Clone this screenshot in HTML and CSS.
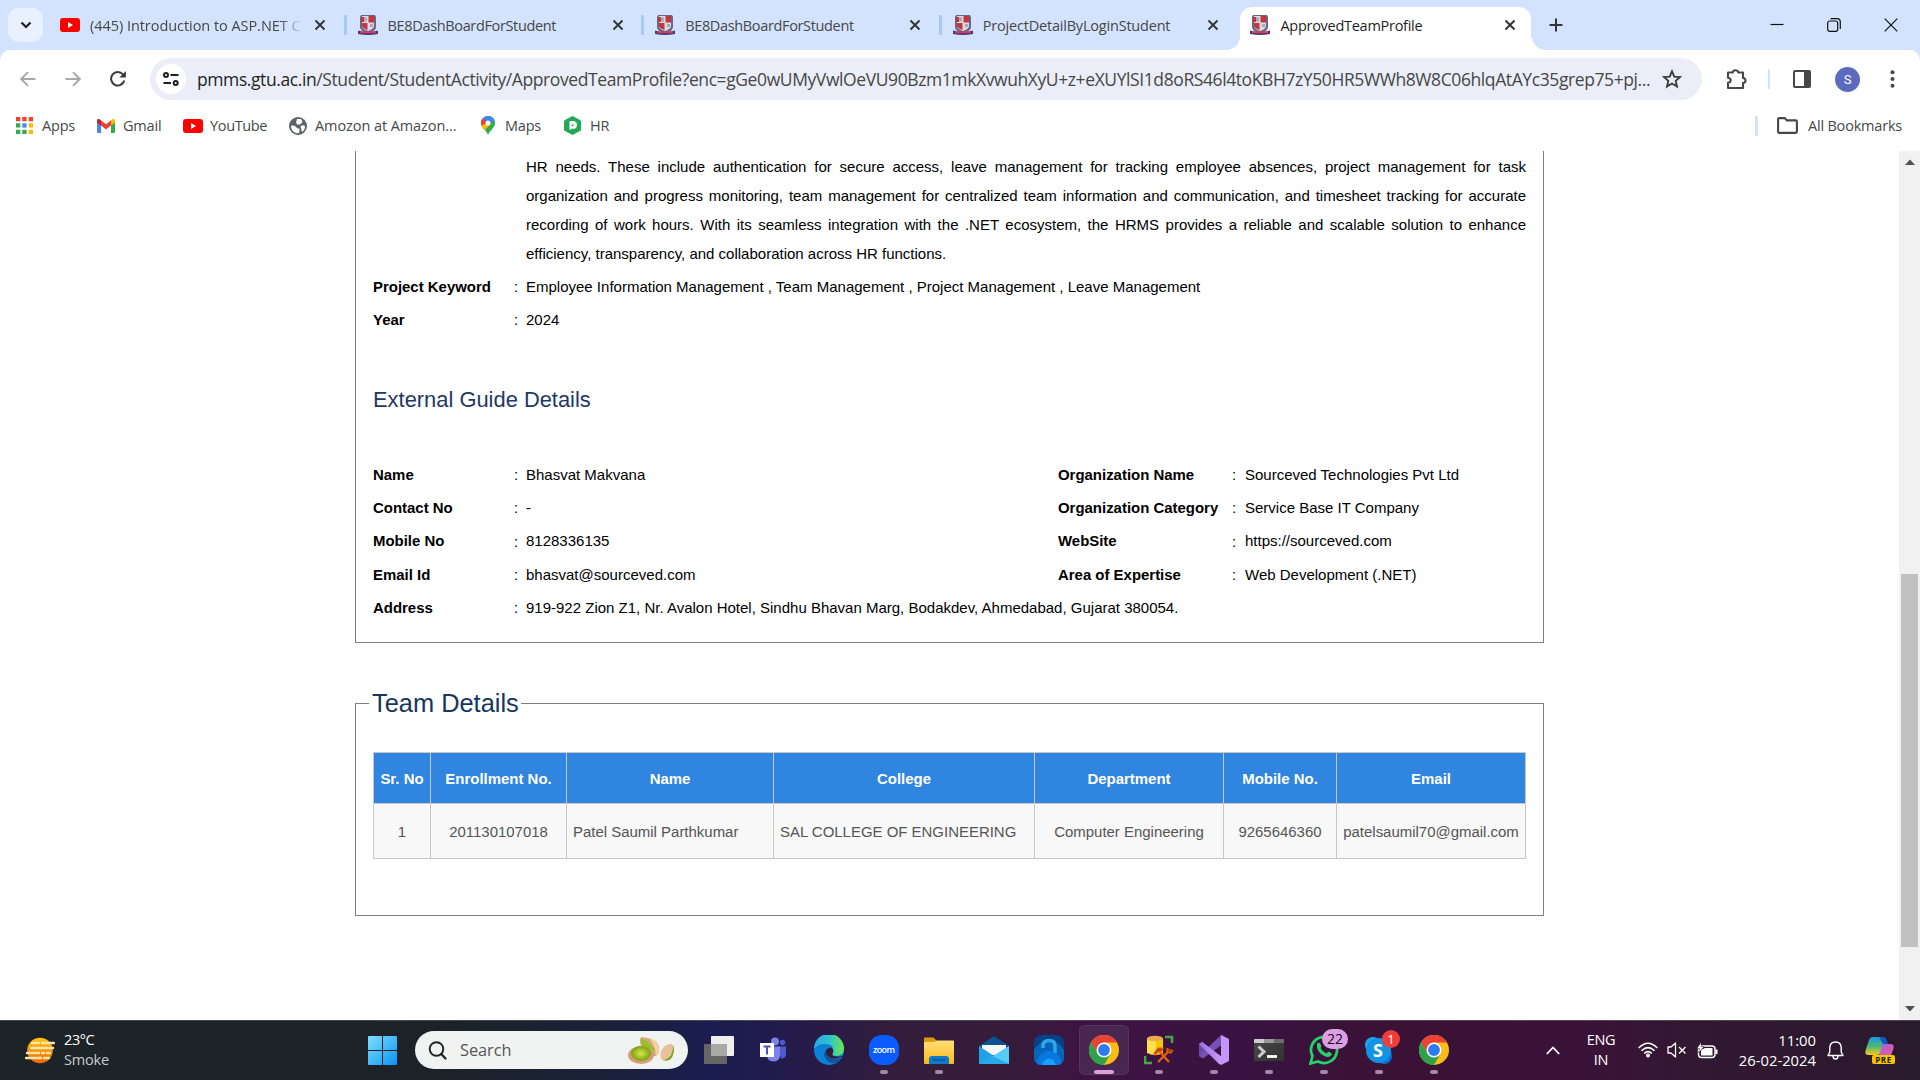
FILE: index.html
```html
<!DOCTYPE html>
<html lang="en">
<head>
<meta charset="utf-8">
<title>ApprovedTeamProfile</title>
<link rel="stylesheet" href="styles.css">
</head>
<body>
<svg class="defs" width="0" height="0" aria-hidden="true">
  <defs>
    <linearGradient id="g-win" x1="0" y1="0" x2="1" y2="1"><stop offset="0" stop-color="#7fe0ff"/><stop offset="1" stop-color="#0a93f5"/></linearGradient>
    <linearGradient id="g-sun" x1="0" y1="0" x2="0" y2="1"><stop offset="0" stop-color="#ffc60b"/><stop offset="1" stop-color="#ee6407"/></linearGradient>
    <linearGradient id="g-edge" x1="0" y1="0" x2="1" y2="0"><stop offset="0" stop-color="#2aa8e8"/><stop offset=".5" stop-color="#2fc0d0"/><stop offset="1" stop-color="#6be84c"/></linearGradient>
    <linearGradient id="g-folder" x1="0" y1="0" x2="0" y2="1"><stop offset="0" stop-color="#ffe07a"/><stop offset="1" stop-color="#fbb818"/></linearGradient>
    <linearGradient id="g-cop1" x1="0" y1="0" x2="0" y2="1"><stop offset="0" stop-color="#1a98e8"/><stop offset=".5" stop-color="#4ab67a"/><stop offset="1" stop-color="#f3cb1c"/></linearGradient>
    <linearGradient id="g-cop2" x1="0" y1="0" x2="1" y2="1"><stop offset="0" stop-color="#a259f0"/><stop offset="1" stop-color="#f2608a"/></linearGradient>
    <linearGradient id="g-term" x1="0" y1="0" x2="1" y2="1"><stop offset="0" stop-color="#4a4a4a"/><stop offset="1" stop-color="#313131"/></linearGradient>
    <linearGradient id="g-vs" x1="0" y1="0" x2="1" y2="0"><stop offset="0" stop-color="#9b6fe0"/><stop offset="1" stop-color="#c99bff"/></linearGradient>
    <radialGradient id="g-nut"><stop offset="0" stop-color="#d8e84a"/><stop offset="1" stop-color="#7aa010"/></radialGradient>
  </defs>
  <symbol id="close" viewBox="0 0 12 12"><path d="M1.5 1.5l9 9M10.5 1.5l-9 9" stroke="#333" stroke-width="1.9" fill="none"/></symbol>
  <symbol id="crest" viewBox="0 0 20 20">
    <path d="M3 0h14l1 2v10q0 4-8 6.500q-8-2.500-8-6.500V2z" fill="#69658d"/>
    <path d="M4 1h12v10q0 3-6 5q-6-2-6-5z" fill="#ddd9e2"/>
    <path d="M10.500 1H16v6.500h-5.500zM4 8h5.500v7q-5.500-2-5.500-4zM3 2h3v5H3z" fill="#c0383c"/>
    <path d="M6 2.500h3v4H6zM12 9h3v3h-3z" fill="#a9a5ba"/>
    <path d="M0 15.500q10 3 20 0V19q-10 2-20 0z" fill="#443a86"/><path d="M2 17.300h16" stroke="#dd3a47" stroke-width="1.800" fill="none"/>
  </symbol>
  <symbol id="ytube" viewBox="0 0 20 14"><rect width="20" height="14" rx="3" fill="#f00"/><path d="M8 4v6l5-3z" fill="#fff"/></symbol>
  <symbol id="chrome" viewBox="0 0 30 30">
    <circle cx="15" cy="15" r="15" fill="#fbbc14"/>
    <path d="M15 15L8.500 18.750L2 7.500A15 15 0 0 0 15 30L21.500 18.750z" fill="#2ba24c"/>
    <path d="M2 7.500A15 15 0 0 1 28 7.500H15L8.500 18.750z" fill="#ea4335"/>
    <path d="M8.500 18.750L2 7.500" stroke="#2ba24c" stroke-width=".6"/>
    <circle cx="15" cy="15" r="7.500" fill="#fff"/><circle cx="15" cy="15" r="5.900" fill="#2d7bf0"/>
  </symbol>
</svg>

<header class="tabstrip">
  <button class="tab-search"><svg width="12" height="8" viewBox="0 0 12 8"><path d="M1.500 1.500L6 6l4.500-4.500" fill="none" stroke="#1f1f1f" stroke-width="2.200"/></svg></button>
  <div class="tab"><svg class="fav fav-yt"><use href="#ytube"/></svg><span class="tab-title fade">(445) Introduction to ASP.NET C</span><svg class="x"><use href="#close"/></svg></div>
  <div class="tab sep"><svg class="fav"><use href="#crest"/></svg><span class="tab-title">BE8DashBoardForStudent</span><svg class="x"><use href="#close"/></svg></div>
  <div class="tab sep"><svg class="fav"><use href="#crest"/></svg><span class="tab-title">BE8DashBoardForStudent</span><svg class="x"><use href="#close"/></svg></div>
  <div class="tab sep"><svg class="fav"><use href="#crest"/></svg><span class="tab-title wide">ProjectDetailByLoginStudent</span><svg class="x"><use href="#close"/></svg></div>
  <div class="tab active"><svg class="fav"><use href="#crest"/></svg><span class="tab-title">ApprovedTeamProfile</span><svg class="x"><use href="#close"/></svg></div>
  <svg class="newtab" width="14" height="14" viewBox="0 0 14 14"><path d="M7 .5v13M.5 7h13" stroke="#333" stroke-width="2"/></svg>
  <div class="winctl">
    <svg width="14" height="14" viewBox="0 0 14 14"><path d="M.5 6.500h13" stroke="#111" stroke-width="1.200"/></svg>
    <svg width="14" height="14" viewBox="0 0 14 14"><rect x=".7" y="3" width="10" height="10.300" rx="2" fill="none" stroke="#111" stroke-width="1.200"/><path d="M3.500 .7H10q3.300 0 3.300 3.300v7" fill="none" stroke="#111" stroke-width="1.200"/></svg>
    <svg width="14" height="14" viewBox="0 0 14 14"><path d="M.7 .7l12.600 12.600M13.300 .7L.7 13.300" stroke="#111" stroke-width="1.200"/></svg>
  </div>
</header>

<div class="toolbar-wrap">
  <nav class="toolbar">
    <div class="nav">
      <svg width="16" height="16" viewBox="0 0 16 16"><path d="M15.500 8H1.500M8 1.200L1.200 8L8 14.800" fill="none" stroke="#a8a8a8" stroke-width="1.900"/></svg>
      <svg width="16" height="16" viewBox="0 0 16 16"><path d="M.5 8h14M8 1.200L14.800 8L8 14.800" fill="none" stroke="#a8a8a8" stroke-width="1.900"/></svg>
      <svg width="16" height="16" viewBox="0 0 16 16"><path d="M14.300 9.500A6.700 6.700 0 1 1 12.900 3.400L14.500 5.200" fill="none" stroke="#3a3a3a" stroke-width="2"/><path d="M15.900 0v6.600H9.300z" fill="#3a3a3a"/></svg>
    </div>
    <div class="omnibox">
      <span class="site-info"><svg width="16" height="14" viewBox="0 0 16 14"><g fill="none" stroke="#1f1f1f" stroke-width="2"><circle cx="3" cy="3" r="2"/><path d="M7.500 3H15.500M.5 11H8"/><circle cx="12.700" cy="11" r="2"/></g></svg></span>
      <span class="url"><b>pmms.gtu.ac.in</b>/Student/StudentActivity/ApprovedTeamProfile?enc=gGe0wUMyVwlOeVU90Bzm1mkXvwuhXyU+z+eXUYlSI1d8oRS46l4toKBH7zY50HR5WWh8W8C06hlqAtAYc35grep75+pj...</span>
      <svg class="star" width="20" height="20" viewBox="0 0 20 20"><path d="M10 2.300l2.300 5.300l5.700.5l-4.300 3.800l1.300 5.600l-5-3l-5 3l1.300-5.600L2 8.100l5.700-.5z" fill="none" stroke="#3c3c3c" stroke-width="1.900"/></svg>
    </div>
    <svg class="puzzle" width="22" height="22" viewBox="0 0 22 22"><path d="M2 4.500h4.800q.2-2.200 2.700-2.200t2.700 2.200H17V10q2.500.2 2.500 2.500T17 15v5H2v-5.300q2.700-.4 2.700-2.500T2 9.700z" fill="none" stroke="#474747" stroke-width="2.100" stroke-linejoin="round"/></svg>
    <i class="vsep"></i>
    <svg class="panel" width="18" height="18" viewBox="0 0 18 18"><rect x="1" y="1" width="16" height="16" rx="1" fill="none" stroke="#474747" stroke-width="2"/><path d="M11 1h6v16h-6z" fill="#474747"/></svg>
    <span class="avatar">S</span>
    <svg class="dots" width="5" height="18" viewBox="0 0 5 18"><g fill="#474747"><circle cx="2.500" cy="2.200" r="2"/><circle cx="2.500" cy="9" r="2"/><circle cx="2.500" cy="15.800" r="2"/></g></svg>
  </nav>
</div>

<nav class="bookmarks">
  <a class="b-apps"><svg width="17" height="17" viewBox="0 0 17 17"><path d="M0 0h4.300v4.300H0zM6.300 0h4.300v4.300H6.300zM12.700 0H17v4.300h-4.300z" fill="#ea4335"/><path d="M0 6.300h4.300v4.300H0zM0 12.700h4.300V17H0zM6.300 12.700h4.300V17H6.300z" fill="#34a853"/><path d="M6.300 6.300h4.300v4.300H6.300z" fill="#4285f4"/><path d="M12.700 6.300H17v4.300h-4.300zM12.700 12.700H17V17h-4.300z" fill="#fbbc04"/></svg>Apps</a>
  <a class="b-gmail"><svg width="18" height="14" viewBox="0 0 18 14"><path d="M0 2v11q0 1 1 1h3V5z" fill="#4285f4"/><path d="M18 2v11q0 1-1 1h-3V5z" fill="#34a853"/><path d="M4 1.200l5 4l5-4V6.500l-5 4l-5-4z" fill="#ea4335"/><path d="M0 2q0-3 3-1.600l1 .8v5.300L0 3.500z" fill="#c5221f"/><path d="M18 2q0-3-3-1.600l-1 .8v5.300l4-3z" fill="#fbbc04"/></svg>Gmail</a>
  <a class="b-yt"><svg width="20" height="14"><use href="#ytube"/></svg>YouTube</a>
  <a class="b-amz"><svg width="18" height="18" viewBox="0 0 18 18"><circle cx="9" cy="9" r="9" fill="#5f6368"/><path d="M2.200 8.500q4-.5 5 1.500t2.500 1.500t.3 4.500q-6 1-7.800-5zM8 2h4l1.500 3L11 7.500H8.200L7 5.500zM11.500 9.500q2-2 4.500-.5q0 4-3 6z" fill="#fff"/></svg>Amozon at Amazon...</a>
  <a class="b-maps"><svg width="14" height="19" viewBox="0 0 14 19"><path d="M7 0a7 7 0 0 1 7 7q0 3-3.500 6.500Q8 16 7 19q-1-3-3.500-5.500Q0 10 0 7a7 7 0 0 1 7-7z" fill="#34a853"/><path d="M7 0a7 7 0 0 1 6.600 4.600L5 12L.5 9.500Q-1 4 3 1.200Q5 0 7 0z" fill="#4285f4"/><path d="M1.700 2.500L7 7L2.500 12.400Q0 9.800 0 7q0-2.600 1.700-4.500z" fill="#ea4335"/><path d="M2.500 12.400L13.600 4.600Q14.800 9 10.500 13.500L9 15.500L3.500 13.500z" fill="#34a853"/><path d="M.4 9.300L4.500 8l5 0l-5.500 6q-2.700-2.500-3.600-4.700z" fill="#fbbc04"/><circle cx="7" cy="7" r="2.500" fill="#fff"/></svg>Maps</a>
  <a class="b-hr"><svg width="17" height="19" viewBox="0 0 17 19"><path d="M8.500 0l7.500 4q1 .6 1 1.600v7.800q0 1-1 1.600l-7.500 4L1 15q-1-.6-1-1.600V5.600Q0 4.600 1 4z" fill="#24a855"/><path d="M5.500 5h3.500a3.900 3.900 0 0 1 0 7.800h-1.200L5.500 14z" fill="#fff"/><path d="M7.800 7.500v3.500l2-1.800z" fill="#24a855"/></svg>HR</a>
  <i class="vsep bsep"></i>
  <a class="b-all"><svg width="21" height="17" viewBox="0 0 21 17"><path d="M1.100 2.200Q1.100 1.100 2.200 1.100H7.700L9.900 3.400h8.900q1.100 0 1.100 1.100v10.300q0 1.100-1.100 1.100H2.200q-1.100 0-1.100-1.100z" fill="none" stroke="#474747" stroke-width="2.100"/></svg>All Bookmarks</a>
</nav>

<div class="viewport">
  <main class="page">
    <section class="box box-guide">
      <p class="desc">HR needs. These include authentication for secure access, leave management for tracking employee absences, project management for task organization and progress monitoring, team management for centralized team information and communication, and timesheet tracking for accurate recording of work hours. With its seamless integration with the .NET ecosystem, the HRMS provides a reliable and scalable solution to enhance efficiency, transparency, and collaboration across HR functions.</p>
      <div class="row"><b>Project Keyword</b><i>:</i><span>Employee Information Management , Team Management , Project Management , Leave Management</span></div>
      <div class="row"><b>Year</b><i>:</i><span>2024</span></div>
      <h2>External Guide Details</h2>
      <div class="row four"><b>Name</b><i>:</i><span>Bhasvat Makvana</span><b>Organization Name</b><i>:</i><span>Sourceved Technologies Pvt Ltd</span></div>
      <div class="row four"><b>Contact No</b><i>:</i><span>-</span><b>Organization Category</b><i>:</i><span>Service Base IT Company</span></div>
      <div class="row four"><b>Mobile No</b><i>:</i><span>8128336135</span><b>WebSite</b><i>:</i><span>https://sourceved.com</span></div>
      <div class="row four"><b>Email Id</b><i>:</i><span>bhasvat@sourceved.com</span><b>Area of Expertise</b><i>:</i><span>Web Development (.NET)</span></div>
      <div class="row"><b>Address</b><i>:</i><span>919-922 Zion Z1, Nr. Avalon Hotel, Sindhu Bhavan Marg, Bodakdev, Ahmedabad, Gujarat 380054.</span></div>
    </section>
    <fieldset class="box box-team">
      <legend>Team Details</legend>
      <table>
        <colgroup><col class="c1"><col class="c2"><col class="c3"><col class="c4"><col class="c5"><col class="c6"><col class="c7"></colgroup>
        <thead><tr><th>Sr. No</th><th>Enrollment No.</th><th>Name</th><th>College</th><th>Department</th><th>Mobile No.</th><th>Email</th></tr></thead>
        <tbody><tr><td>1</td><td>201130107018</td><td class="l">Patel Saumil Parthkumar</td><td class="l">SAL COLLEGE OF ENGINEERING</td><td>Computer Engineering</td><td>9265646360</td><td>patelsaumil70@gmail.com</td></tr></tbody>
      </table>
    </fieldset>
  </main>
  <div class="scrollbar">
    <svg width="10" height="6" viewBox="0 0 10 6"><path d="M0 6l5-5.500L10 6z" fill="#505050"/></svg>
    <div class="thumb"></div>
    <svg class="down" width="10" height="6" viewBox="0 0 10 6"><path d="M0 0l5 5.500L10 0z" fill="#505050"/></svg>
  </div>
</div>

<footer class="taskbar">
  <div class="weather">
    <svg width="30" height="27" viewBox="0 0 30 27"><circle cx="15" cy="13.500" r="12.800" fill="url(#g-sun)"/><g stroke="#f7e3a6" stroke-width="2.400" stroke-linecap="round"><path d="M7 6h7M17 6h12M6 11h22M2 16h12M17 16h2M22 16h3M1 21h15M19 21h5"/></g></svg>
    <div><span class="deg">23°C</span><span>Smoke</span></div>
  </div>
  <svg class="winlogo" width="29" height="29" viewBox="0 0 29 29"><path d="M0 1q0-1 1-1h13v14H0zM15 0h13q1 0 1 1v13H15zM0 15h14v14H1q-1 0-1-1zM15 15h14v13q0 1-1 1H15z" fill="url(#g-win)"/></svg>
  <div class="search">
    <svg width="19" height="19" viewBox="0 0 19 19"><circle cx="8.500" cy="8" r="6.800" fill="none" stroke="#222" stroke-width="1.900"/><path d="M13.200 13l4.300 4.500" stroke="#222" stroke-width="2.300" stroke-linecap="round"/></svg>
    <span>Search</span>
    <svg width="48" height="29" viewBox="0 0 48 29"><path d="M14 1q16 1 18 10q1 7-3 9q-9 0-15-10q-2-5 0-9z" fill="#d9a878"/><path d="M14 2q12 6 14 13q-10-2-14-8z" fill="#9abf28"/><path d="M22 2q10 3 10 11q0 6-3 7q-1-12-7-18z" fill="#f2d0a4"/><path d="M45 8q3 5 1 11q-3 7-9 6q-5-2-3-10q4-8 11-7z" fill="#e8c298"/><path d="M46 9q1 12-9 15q7 2 9-5q2-6 0-10z" fill="#7da51f"/><ellipse cx="14" cy="19" rx="13" ry="9" fill="#d49f78"/><ellipse cx="14" cy="17.500" rx="10" ry="7.500" fill="url(#g-nut)"/></svg>
  </div>
  <div class="apps">
    <div class="app"><svg width="30" height="30" viewBox="0 0 30 30"><path d="M8 1h21q1 0 1 1v18q0 1-1 1H7V2q0-1 1-1z" fill="#eee"/><rect y="9" width="23" height="20" rx="1" fill="#666"/><path d="M7 9h16v12H7z" fill="#a8a8a8"/></svg></div>
    <div class="app"><svg width="30" height="30" viewBox="0 0 30 30"><circle cx="16" cy="6.500" r="4" fill="#7b83eb"/><circle cx="23.500" cy="7.500" r="2.700" fill="#5059c9"/><path d="M19 11.500h8v8q0 4-5 4z" fill="#5059c9"/><path d="M8 11.500h13v8q0 7-6.500 7T8 20z" fill="#7b83eb"/><rect x="1" y="8" width="14" height="14" fill="#fff"/><path d="M4.500 11.500h7M8 11.500v8" stroke="#4b53bc" stroke-width="2"/></svg></div>
    <div class="app"><svg width="30" height="30" viewBox="0 0 30 30"><circle cx="15" cy="15" r="15" fill="#0b80d4"/><path d="M0 14A15 15 0 0 1 30 13.500Q30 21 22 21Q17 20.500 19 18Q21 9 11 9Q4 9 0 14z" fill="url(#g-edge)"/><path d="M13 14q-5 4-1 10t11 3.500q3-1.500 4.500-4.500q-6 2.500-10.500-.5T13 14z" fill="#11529a"/><path d="M13 14q-3 4 2 8q6 3 11.500 0l1.500.5q1-1 0-1.500q-4 1-8 0q-3-1-1-3q1-4-2-5.500q-3 0-4 1.500z" fill="#351c3b"/></svg></div>
    <div class="app run"><svg width="30" height="30" viewBox="0 0 30 30"><rect width="30" height="30" rx="12.500" fill="#0b5cff"/><text x="15" y="17.800" text-anchor="middle" class="zoom-word" textLength="22">zoom</text></svg></div>
    <div class="app run"><svg width="30" height="30" viewBox="0 0 30 30"><path d="M0 3.500q0-1 1-1h8.500L13 6h17v8H0z" fill="#dd9a0a"/><path d="M0 7h10l3-1.500h16q1 0 1 1V28q0 1-1 1H1q-1 0-1-1z" fill="url(#g-folder)"/><path d="M5 29v-5q0-3 3-3h14q3 0 3 3v5z" fill="#0f7bc8"/><path d="M8.500 25h13" stroke="#0a4f8a" stroke-width="1.300"/></svg></div>
    <div class="app"><svg width="30" height="30" viewBox="0 0 30 30"><path d="M0 11L15 1l15 10v7H0z" fill="#0a5391"/><path d="M3 10h24v10H3z" fill="#f7f7f7"/><path d="M0 11l18 12l12 6H0z" fill="#1fa3e6"/><path d="M30 11L13 21.500L30 29z" fill="#55cbf8"/><path d="M0 29l13-8l17 8z" fill="#28a9ea"/></svg></div>
    <div class="app"><svg width="30" height="30" viewBox="0 0 30 30"><clipPath id="lockclip"><rect width="30" height="30" rx="7"/></clipPath><g clip-path="url(#lockclip)"><rect width="30" height="30" fill="#07408a"/><circle cx="15" cy="23" r="17" fill="#0864b8"/><path d="M9 13v-2q0-5.500 6-5.500t6 5.500v7" stroke="#2fa5e8" stroke-width="3.600" fill="none"/><circle cx="15" cy="28" r="12" fill="#0878e0"/><circle cx="15" cy="30" r="6.500" fill="#16a0ff"/></g></svg></div>
    <div class="app run current"><svg width="30" height="30"><use href="#chrome"/></svg></div>
    <div class="app run"><svg width="30" height="30" viewBox="0 0 30 30"><path d="M3 3h16v15q-8 4-16 0z" fill="#fbe04c"/><path d="M12 3h7v15l-7 2z" fill="#f2c800"/><ellipse cx="11" cy="3.500" rx="8" ry="2.800" fill="#f0a850"/><path d="M21 2h7v6M1 21v7h7" stroke="#47a447" stroke-width="2.600" fill="none"/><path d="M14 27L26 15M15 16l10 11" stroke="#e8640c" stroke-width="2.200"/><path d="M10 18l4-5h5l-1 3l-4 1l-3 3zM23 13v4l4 1l2-3" stroke="#e8640c" stroke-width="1.200" fill="#b34305"/></svg></div>
    <div class="app run"><svg width="30" height="30" viewBox="0 0 30 30"><path d="M0 9l3-2l6 4.500v7L3 23l-3-2z" fill="#6b4ba0"/><path d="M0 21L21 1l3-1v9L4 23.500z" fill="#7650b4"/><path d="M0 9l3-2.200L23 22v8l-3-1z" fill="url(#g-vs)"/><path d="M22 0l8 4v22l-8 4z" fill="#c595fb"/></svg></div>
    <div class="app run"><svg width="30" height="30" viewBox="0 0 30 30"><rect y="4" width="30" height="22" rx="1.500" fill="url(#g-term)"/><path d="M0 8V5q0-1 1-1h9.500v4z" fill="#ccc"/><path d="M10.500 4H20v4h-9.500z" fill="#999"/><path d="M20 4h9q1 0 1 1v3H20z" fill="#6c6c6c"/><path d="M4.500 11.500l5.500 5.200L4.500 22" fill="none" stroke="#ccc" stroke-width="3"/><path d="M13 21.500h10" stroke="#fff" stroke-width="2.800"/></svg></div>
    <div class="app run"><svg width="30" height="30" viewBox="0 0 30 30"><path d="M1.500 28.500l2-7.500A13 13 0 1 1 9 26.500z" fill="none" stroke="#25d366" stroke-width="2.700"/><path d="M8 9q2-3 4 1q1 1.500-.5 3q2 4 6 5.500q1.500-2.500 3-1.500q4 2 1 4q-3 2.500-8-1T8 12z" fill="#25d366"/></svg><em class="badge pink">22</em></div>
    <div class="app run"><svg width="30" height="30" viewBox="0 0 30 30"><circle cx="9" cy="10" r="8" fill="#1aa8ef"/><circle cx="20" cy="21" r="8" fill="#0c6fd2"/><circle cx="14.500" cy="15.500" r="12.500" fill="#1393e4"/><text x="14" y="22" text-anchor="middle" class="skype-s">S</text></svg><em class="badge red">1</em></div>
    <div class="app run"><svg width="30" height="30"><use href="#chrome"/></svg></div>
  </div>
  <div class="tray">
    <svg class="t-chev" width="14" height="9" viewBox="0 0 14 9"><path d="M.8 8L7 1.500L13.200 8" fill="none" stroke="#fff" stroke-width="1.800"/></svg>
    <div class="lang"><span>ENG</span><span>IN</span></div>
    <svg class="t-wifi" width="20" height="16" viewBox="0 0 20 16"><g fill="none" stroke="#fff" stroke-width="1.600"><path d="M.7 6Q10-3.500 19.300 6M3.500 8.800q6.500-6.400 13 0M6.200 11.500q3.800-3.600 7.600 0"/></g><circle cx="10" cy="13.500" r="2" fill="#fff"/></svg>
    <svg class="t-spk" width="20" height="16" viewBox="0 0 20 16"><path d="M1 5h3l4.500-4v14L4 11H1z" fill="none" stroke="#fff" stroke-width="1.300" stroke-linejoin="round"/><path d="M12 5l6.500 6.500M18.500 5L12 11.500" stroke="#fff" stroke-width="1.300"/></svg>
    <svg class="t-bat" width="21" height="17" viewBox="0 0 21 17"><rect x="1.500" y="4" width="16.500" height="11.500" rx="3" fill="none" stroke="#fff" stroke-width="1.400"/><path d="M4 8l4-2h7.500v7.500H4zM18.500 7.500h2v4.500h-2z" fill="#fff"/><path d="M4 0L0 6.500h2.500L1.500 11L7 4.500H4z" fill="#fff" stroke="#33172f" stroke-width=".5"/></svg>
    <div class="clock"><span>11:00</span><span>26-02-2024</span></div>
    <svg class="t-bell" width="17" height="19" viewBox="0 0 17 19"><path d="M1 14.500L2.800 11V7q0-6 5.700-6t5.700 6v4l1.800 3.500z" fill="none" stroke="#fff" stroke-width="1.400" stroke-linejoin="round"/><path d="M6 15q0 3 2.500 3t2.500-3" fill="none" stroke="#fff" stroke-width="1.400"/></svg>
    <div class="copilot"><svg width="30" height="28" viewBox="0 0 30 28"><path d="M7 1h10q4 0 3 4l-3 9q-1 5-6 5H3q-4 0-2-6l3-9q1-3 3-3z" fill="url(#g-cop1)"/><path d="M14 1h4q3 0 4 4l1 3h-5z" fill="#1557c0"/><path d="M18 8h8q4 0 2 6l-3 8H13z" fill="url(#g-cop2)"/></svg><em>PRE</em></div>
  </div>
</footer>
</body>
</html>
```
FILE: styles.css
```css
* { box-sizing: border-box; }
body { margin: 0; width: 1920px; height: 1080px; overflow: hidden; display: flex; flex-direction: column; background: #fff; font-family: "Open Sans", "Noto Sans", sans-serif; color: #474747; }
svg { display: block; flex: none; }
.defs { position: absolute; }

/* Tab strip */
.tabstrip { height: 50px; flex: none; display: flex; align-items: center; background: #d3e3fd; padding-left: 8px; }
.tab-search { width: 35px; height: 34px; border: 0; border-radius: 11px; background: #e9f1fe; display: flex; align-items: center; justify-content: center; margin-right: 4px; padding: 0; }
.tab { position: relative; width: 297.6px; height: 50px; flex: none; display: flex; align-items: center; padding-left: 13px; font-size: 14.5px; letter-spacing: -0.35px; }
.tab.sep::before { content: ""; position: absolute; left: -1px; top: 15px; width: 3px; height: 20px; border-radius: 1px; background: #a8c7fa; }
.fav { width: 20px; height: 20px; margin-right: 10px; }
.fav-yt { height: 14px; }
.tab-title { width: 224px; white-space: nowrap; overflow: hidden; }
.tab-title.wide { letter-spacing: -0.2px; }
.tab-title.fade { width: 210px; margin-right: 14px; letter-spacing: -0.05px; -webkit-mask-image: linear-gradient(90deg, #000 190px, transparent 212px); mask-image: linear-gradient(90deg, #000 190px, transparent 212px); }
.x { width: 12px; height: 12px; }
.tab.active { z-index: 0; color: #1f1f1f; letter-spacing: -0.27px; }
.tab.active::before { content: ""; position: absolute; z-index: -1; left: 3px; right: 4px; top: 7px; bottom: 0; background: #fff; border-radius: 12px 12px 0 0; }
.tab.active::after { content: ""; position: absolute; z-index: -1; left: -10px; right: -10px; bottom: 0; height: 13px; background: radial-gradient(circle at 0 0, transparent 12.5px, #fff 13px) left / 13px 13px no-repeat, radial-gradient(circle at 100% 0, transparent 12.5px, #fff 13px) right / 14px 13px no-repeat; }
.newtab { margin-left: 14px; }
.winctl { margin-left: auto; margin-right: 22px; display: flex; gap: 43px; }

/* Toolbar */
.toolbar-wrap { flex: none; background: #d3e3fd; }
.toolbar { height: 58px; background: #fff; border-radius: 10px 10px 0 0; display: flex; align-items: center; }
.nav { width: 150px; padding-left: 20px; display: flex; gap: 29px; }
.omnibox { width: 1552px; height: 42px; border-radius: 21px; background: #ebeef8; display: flex; align-items: center; padding-left: 6px; }
.site-info { width: 30px; height: 30px; border-radius: 50%; background: #fff; display: flex; align-items: center; justify-content: center; }
.url { width: 1465px; margin-left: 11px; font-size: 17.5px; letter-spacing: -0.405px; white-space: nowrap; }
.url b { font-weight: 400; color: #1f1f1f; }
.puzzle { margin-left: 24px; }
.vsep { width: 2px; height: 20px; background: #d3e3fd; margin-left: 20px; }
.panel { margin-left: 23px; }
.avatar { width: 25px; height: 25px; margin-left: 24px; border-radius: 50%; background: #5c6bc0; color: #fff; font: 13px/25px Roboto, sans-serif; text-align: center; }
.dots { margin-left: 30px; }

/* Bookmarks bar */
.bookmarks { height: 43px; flex: none; display: flex; align-items: center; padding: 0 0 8px 16px; font-size: 14.5px; letter-spacing: -0.2px; white-space: nowrap; }
.bookmarks a { display: flex; align-items: center; gap: 9px; }
.b-apps { width: 81px; }
.bookmarks .b-gmail { width: 86px; gap: 8px; }
.bookmarks .b-yt { width: 106px; gap: 7px; letter-spacing: -0.35px; }
.bookmarks .b-amz { width: 192px; gap: 8px; letter-spacing: -0.08px; }
.bookmarks .b-maps { width: 83px; gap: 10px; }
.b-hr { width: 60px; }
.bsep { width: 3px; margin-left: auto; margin-right: 19px; }
.bookmarks .b-all { width: 143px; gap: 10px; }

/* Page */
.viewport { height: 869px; flex: none; display: flex; overflow: hidden; }
.page { width: 1899px; padding-left: 355px; font-family: "Liberation Sans", Arial, sans-serif; font-size: 15px; color: #000; }
.box { width: 1189px; border: 1px solid #808080; margin: 0; }
.box-guide { height: 492px; border-top: 0; padding: 1px 17px 0; }
.desc { margin: 0 0 1px 153px; line-height: 29.1px; text-align: justify; width: 1000px; }
.row { height: 33.3px; display: grid; grid-template-columns: 141px 12px 1fr; align-items: center; white-space: nowrap; }
.row.four { grid-template-columns: 141px 12px 532px 174px 13px 1fr; }
.row b { font-size: 14.95px; }
.row i { font-style: normal; padding-top: 1px; }
h2 { margin: 0; height: 121.500px; padding-top: 6px; display: flex; align-items: center; font-size: 21.9px; font-weight: 400; color: #1f3864; }
.box-team { margin-top: 43px; height: 230px; padding: 0 17px 0 14px; }
legend { font-size: 25.4px; line-height: 34px; padding: 0 2px 0 3px; margin-left: -1px; color: #17365d; }
table { margin: 32px 0 0 3px; width: 1153px; table-layout: fixed; border-collapse: collapse; font-size: 14.96px; }
.c1 { width: 57px; } .c2 { width: 136px; } .c3 { width: 207px; } .c4 { width: 261px; } .c5 { width: 189px; } .c6 { width: 113px; } .c7 { width: 189px; }
th, td { border: 1px solid #c8c8c8; padding: 0; text-align: center; white-space: nowrap; }
th { height: 51px; background: #2f85e0; color: #fff; }
td { height: 55px; background: #f8f8f8; color: #555; }
td.l { text-align: left; padding-left: 6px; }
.scrollbar { width: 21px; background: #f1f1f1; display: flex; flex-direction: column; align-items: center; padding: 8px 0; }
.thumb { width: 17px; height: 373px; margin-top: 409px; background: #c1c1c1; }
.down { margin-top: auto; }

/* Taskbar */
.taskbar { height: 60px; flex: none; display: flex; align-items: center; border-top: 1px solid #4a4650; padding-bottom: 1px; color: #fff; background: linear-gradient(90deg, #1c2428 0, #1b2329 450px, #1a2138 600px, #1b1d50 710px, #221b4c 780px, #341c3c 900px, #351c3b 1010px, #3e1342 1090px, #381340 1250px, #3b1236 1400px, #3a1238 1580px, #321832 1700px, #2a1a2d 1920px); }
.weather { width: 368px; padding-left: 25px; display: flex; align-items: center; gap: 9px; font-size: 14.5px; line-height: 20px; letter-spacing: -0.2px; }
.weather div { display: flex; flex-direction: column; color: #c9cccd; }
.weather .deg { color: #fff; letter-spacing: -0.4px; }
.search { width: 273px; height: 38px; margin-left: 18px; margin-right: 1px; border-radius: 19px; background: #f1f3f3; display: flex; align-items: center; padding: 0 13px; color: #555; font-size: 16.3px; }
.search span { flex: 1; margin-left: 13px; }
.apps { display: flex; margin-left: 5px; }
.app { position: relative; width: 50px; height: 50px; margin-right: 5px; border-radius: 6px; display: flex; align-items: center; justify-content: center; }
.app.run::after { content: ""; position: absolute; bottom: 1px; left: 21px; width: 8px; height: 4px; border-radius: 2px; background: #a08ba3; }
.app.current { background: #492750; box-shadow: inset 0 0 0 1px #553559; }
.app.current::after { left: 15px; width: 20px; background: #dc9fe3; }
.zoom-word { font: 600 9px "Open Sans", sans-serif; fill: #fff; }
.skype-s { font: 700 18px "Open Sans", sans-serif; fill: #fff; }
.badge { position: absolute; font-style: normal; text-align: center; height: 20px; border-radius: 10px; line-height: 20px; }
.badge.pink { left: 23px; top: 4px; width: 26px; background: #dc9fe3; color: #111; font-size: 14px; }
.badge.red { left: 28px; top: 5px; width: 18px; height: 18px; line-height: 18px; background: #ef3e3a; color: #fff; font-size: 13px; }
.tray { display: flex; align-items: center; margin-left: auto; font-size: 14.5px; line-height: 20px; }
.lang, .clock { display: flex; flex-direction: column; }
.lang { width: 40px; margin: 0 17px 0 21px; text-align: center; letter-spacing: -0.3px; align-items: center; }
.t-spk { margin-left: 9px; }
.t-bat { margin-left: 10px; }
.clock { width: 98px; text-align: right; letter-spacing: 0; font-size: 14.800px; }
.t-bell { margin-left: 11px; }
.copilot { position: relative; margin: 0 25px 0 21px; }
.copilot em { position: absolute; left: 7px; top: 19px; width: 23px; height: 9px; border-radius: 2px; background: #fcc400; color: #222; font: 700 8px/9px "Open Sans", sans-serif; letter-spacing: .6px; text-align: center; }
```
